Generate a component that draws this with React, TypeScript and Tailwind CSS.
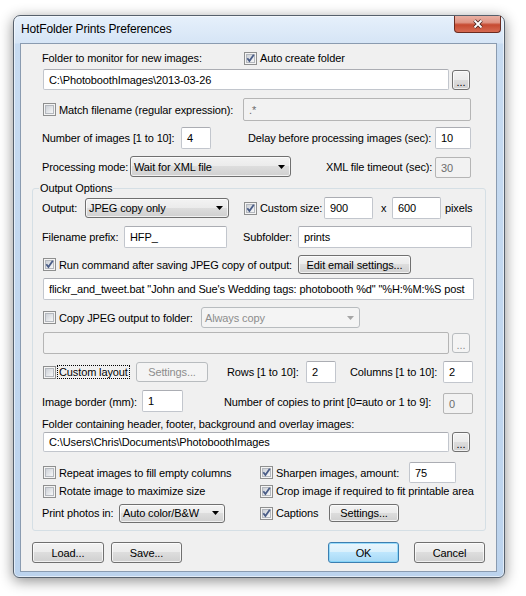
import clsx from "clsx";
import { ReactNode } from "react";

const font =
  "font-['Liberation_Sans',Arial,sans-serif] text-[11px] leading-[14px] tracking-[-0.12px] text-black";

function CheckBox({ checked = false }: { checked?: boolean }) {
  return (
    <span className="relative flex h-[13px] w-[13px] shrink-0 items-center justify-center border border-[#8e8f8f] bg-[#f4f4f4]">
      <span className="h-[9px] w-[9px] border border-[#b4b8be] bg-[linear-gradient(135deg,#cdd1d7,#f6f7f8)]" />
      {checked && (
        <svg className="absolute left-[-1px] top-[-1px]" width="13" height="13" viewBox="0 0 13 13">
          <path d="M3.3 6.3 5.4 8.9 9.8 2.7" fill="none" stroke="#4a5d87" strokeWidth="1.8" />
        </svg>
      )}
    </span>
  );
}

function Option({
  checked,
  label,
  className,
}: {
  checked?: boolean;
  label: ReactNode;
  className?: string;
}) {
  return (
    <span className={clsx("flex shrink-0 items-center", className)}>
      <CheckBox checked={checked} />
      <span className="whitespace-nowrap pl-[3px]">{label}</span>
    </span>
  );
}

function Label({ children, className }: { children: ReactNode; className?: string }) {
  return <span className={clsx("shrink-0 whitespace-nowrap", className)}>{children}</span>;
}

function Field({
  value = "",
  disabled,
  className,
}: {
  value?: string;
  disabled?: boolean;
  className?: string;
}) {
  return (
    <span
      className={clsx(
        "flex shrink-0 items-center overflow-hidden whitespace-nowrap rounded-[2px] border pl-[5px]",
        disabled
          ? "border-[#b5b5b5] bg-[#f2f2f2] text-[#6d6d6d]"
          : "border-[#c2c6cd] border-t-[#abadb3] bg-white",
        className
      )}
    >
      {value}
    </span>
  );
}

function Combo({
  value,
  disabled,
  className,
}: {
  value: string;
  disabled?: boolean;
  className?: string;
}) {
  return (
    <span
      className={clsx(
        "flex shrink-0 items-center justify-between rounded-[3px] border pl-[3px] pr-[5px]",
        disabled
          ? "border-[#b8bcbf] bg-[#f4f4f4] text-[#8d8d8d]"
          : "border-[#707070] bg-[linear-gradient(#f3f3f3,#ebebeb_50%,#dddddd_50%,#d0d0d0)] shadow-[inset_0_0_0_1px_rgba(255,255,255,0.7)]",
        className
      )}
    >
      <span className="whitespace-nowrap">{value}</span>
      <svg width="7" height="4" viewBox="0 0 7 4">
        <path d="M0 0h7L3.5 4z" fill={disabled ? "#a6a6a6" : "#000"} />
      </svg>
    </span>
  );
}

function Btn({
  children,
  disabled,
  primary,
  className,
}: {
  children: ReactNode;
  disabled?: boolean;
  primary?: boolean;
  className?: string;
}) {
  return (
    <span
      className={clsx(
        "flex shrink-0 items-center justify-center whitespace-nowrap rounded-[3px] border",
        disabled
          ? "border-[#b8bcbf] bg-[#f4f4f4] text-[#8d8d8d]"
          : primary
            ? "border-[#3c7fb1] bg-[linear-gradient(#eaf6fd,#d9f0fc_50%,#bee6fd_50%,#a7d9f5)] shadow-[inset_0_0_0_1px_rgba(120,210,250,0.7)]"
            : "border-[#707070] bg-[linear-gradient(#f3f3f3,#ebebeb_50%,#dddddd_50%,#d0d0d0)] shadow-[inset_0_0_0_1px_rgba(255,255,255,0.7)]",
        className
      )}
    >
      {children}
    </span>
  );
}

function Browse({ disabled }: { disabled?: boolean }) {
  return (
    <Btn disabled={disabled} className="ml-[3px] h-[20px] w-[18px] items-end pb-[3px] leading-[8px]">
      ...
    </Btn>
  );
}

export default function App() {
  return (
    <div className={clsx("h-[596px] w-[526px] bg-white pl-[13px] pt-[15px]", font)}>
      <div className="flex h-[563px] w-[492px] flex-col rounded-b-[6px] rounded-t-[7px] border border-[#56606c] bg-[linear-gradient(180deg,#e6f0fb_0px,#d6e5f6_27px,#c7dbf1_28px,#bcd3ed_100%)] shadow-[inset_0_0_0_1px_rgba(255,255,255,0.55),0_3px_14px_rgba(0,0,0,0.45)]">
        <div className="flex h-[27px] shrink-0 items-start justify-between">
          <span className="pl-[7px] pt-[6px] text-[12px] leading-[14px] tracking-[-0.15px]">
            HotFolder Prints Preferences
          </span>
          <span className="mr-[3px] flex h-[17px] w-[47px] items-center justify-center rounded-b-[4px] border border-t-0 border-[#6b2b20] bg-[linear-gradient(#eab0a3,#df9585_40%,#c64a31_55%,#d66a52)]">
            <svg width="12" height="10" viewBox="0 0 12 10">
              <path d="M2.5 1.5 9.5 8.5M9.5 1.5 2.5 8.5" stroke="#4b2520" strokeWidth="3.6" />
              <path d="M2.5 1.5 9.5 8.5M9.5 1.5 2.5 8.5" stroke="#fff" strokeWidth="1.8" />
            </svg>
          </span>
        </div>

        <div className="ml-[6px] flex h-[529px] w-[477px] flex-col border border-[#8a9bb0] bg-[#f0f0f0]">
          <div className="mt-[7px] flex h-[14px] items-center pl-[21px]">
            <Label className="w-[202px]">Folder to monitor for new images:</Label>
            <Option checked label="Auto create folder" />
          </div>
          <div className="mt-[4px] flex h-[21px] items-center pl-[21px]">
            <Field value="C:\PhotoboothImages\2013-03-26" className="ml-[1px] h-[21px] w-[406px]" />
            <Browse />
          </div>
          <div className="mt-[8px] flex h-[23px] items-center pl-[21px]">
            <Option label="Match filename (regular expression):" className="ml-[1px] w-[200px]" />
            <Field disabled value=".*" className="h-[23px] w-[228px]" />
          </div>
          <div className="mt-[6px] flex h-[22px] items-center pl-[21px]">
            <Label className="w-[139px]">Number of images [1 to 10]:</Label>
            <Field value="4" className="h-[22px] w-[30px]" />
            <Label className="ml-[37px] w-[187px]">Delay before processing images (sec):</Label>
            <Field value="10" className="h-[22px] w-[36px]" />
          </div>
          <div className="mt-[7px] flex h-[22px] items-center pl-[21px]">
            <Label className="w-[88px]">Processing mode:</Label>
            <Combo value="Wait for XML file" className="h-[21px] w-[161px] self-start" />
            <Label className="ml-[35px] w-[109px]">XML file timeout (sec):</Label>
            <Field disabled value="30" className="h-[21px] w-[36px] self-end" />
          </div>

          <fieldset className="ml-[11px] mt-[3px] w-[454px] rounded-[3px] border border-[#d5dfe5] pb-[7px]">
            <legend className="ml-[6px] px-[1px] leading-[14px]">Output Options</legend>
            <div className="mt-[2px] flex h-[22px] items-center pl-[9px]">
              <Label className="w-[43px]">Output:</Label>
              <Combo value="JPEG copy only" className="h-[20px] w-[144px]" />
              <Option checked label="Custom size:" className="ml-[15px] w-[80px]" />
              <Field value="900" className="h-[22px] w-[49px]" />
              <Label className="w-[19px] pl-[8px]">x</Label>
              <Field value="600" className="h-[22px] w-[49px]" />
              <Label className="pl-[4px]">pixels</Label>
            </div>
            <div className="mt-[7px] flex h-[22px] items-center pl-[9px]">
              <Label className="w-[82px]">Filename prefix:</Label>
              <Field value="HFP_" className="h-[22px] w-[103px]" />
              <Label className="ml-[16px] w-[55px]">Subfolder:</Label>
              <Field value="prints" className="h-[22px] w-[174px]" />
            </div>
            <div className="mt-[7px] flex h-[19px] items-center pl-[9px]">
              <Option checked label="Run command after saving JPEG copy of output:" className="ml-[1px] w-[255px]" />
              <Btn className="h-[19px] w-[113px]">Edit email settings...</Btn>
            </div>
            <div className="mt-[4px] flex h-[22px] items-center pl-[9px]">
              <Field
                value={`flickr_and_tweet.bat "John and Sue's Wedding tags: photobooth %d" "%H:%M:%S post`}
                className="ml-[1px] h-[22px] w-[431px]"
              />
            </div>
            <div className="mt-[7px] flex h-[21px] items-center pl-[9px]">
              <Option label="Copy JPEG output to folder:" className="ml-[1px] w-[158px]" />
              <Combo disabled value="Always copy" className="h-[21px] w-[159px]" />
            </div>
            <div className="mt-[4px] flex h-[22px] items-center pl-[9px]">
              <Field disabled className="ml-[1px] h-[22px] w-[406px]" />
              <Browse disabled />
            </div>
            <div className="mt-[7px] flex h-[22px] items-center pl-[9px]">
              <span className="ml-[1px] flex w-[93px] shrink-0 items-center">
                <CheckBox />
                <span className="ml-[1px] whitespace-nowrap border border-dotted border-black px-[1px] leading-[12px]">
                  Custom layout
                </span>
              </span>
              <Btn disabled className="h-[20px] w-[72px]">
                Settings...
              </Btn>
              <Label className="ml-[19px] w-[79px]">Rows [1 to 10]:</Label>
              <Field value="2" className="h-[22px] w-[30px]" />
              <Label className="ml-[14px] w-[93px]">Columns [1 to 10]:</Label>
              <Field value="2" className="h-[22px] w-[30px]" />
            </div>
            <div className="mt-[7px] flex h-[24px] items-center pl-[9px]">
              <Label className="w-[100px]">Image border (mm):</Label>
              <Field value="1" className="h-[22px] w-[41px] self-start" />
              <Label className="ml-[41px] w-[219px]">Number of copies to print [0=auto or 1 to 9]:</Label>
              <Field disabled value="0" className="h-[21px] w-[30px] self-end" />
            </div>
            <div className="mt-[3px] flex h-[14px] items-center pl-[9px]">
              <Label>Folder containing header, footer, background and overlay images:</Label>
            </div>
            <div className="mt-[1px] flex h-[20px] items-center pl-[9px]">
              <Field value="C:\Users\Chris\Documents\PhotoboothImages" className="ml-[1px] h-[20px] w-[406px]" />
              <Browse />
            </div>
            <div className="mt-[10px] flex h-[21px] items-center pl-[9px]">
              <Option label="Repeat images to fill empty columns" className="ml-[1px] w-[217px]" />
              <Option checked label="Sharpen images, amount:" className="w-[149px]" />
              <Field value="75" className="h-[21px] w-[47px]" />
            </div>
            <div className="mt-[1px] flex h-[14px] items-center pl-[9px]">
              <Option label="Rotate image to maximize size" className="ml-[1px] w-[217px]" />
              <Option checked label="Crop image if required to fit printable area" />
            </div>
            <div className="mt-[5px] flex h-[20px] items-center pl-[9px]">
              <Label className="w-[77px]">Print photos in:</Label>
              <Combo value="Auto color/B&W" className="h-[19px] w-[106px]" />
              <Option checked label="Captions" className="ml-[35px] w-[69px]" />
              <Btn className="h-[18px] w-[70px]">Settings...</Btn>
            </div>
          </fieldset>

          <div className="mt-[11px] flex h-[21px] items-center pl-[11px]">
            <Btn className="h-[21px] w-[72px]">Load...</Btn>
            <Btn className="ml-[7px] h-[21px] w-[71px]">Save...</Btn>
            <Btn primary className="ml-[146px] h-[21px] w-[71px]">
              OK
            </Btn>
            <Btn className="ml-[15px] h-[21px] w-[71px]">Cancel</Btn>
          </div>
        </div>
      </div>
    </div>
  );
}
